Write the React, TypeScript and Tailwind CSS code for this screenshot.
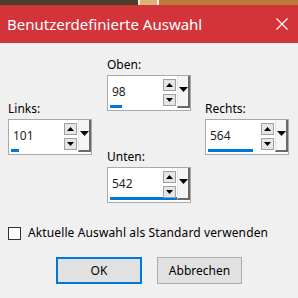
import React from 'react';

const font = { fontFamily: '"Segoe UI", "Noto Sans", "Open Sans", sans-serif' };

function Tri({ dir, w, h }: { dir: 'up' | 'down'; w: number; h: number }) {
  return (
    <svg width={w} height={h} viewBox={`0 0 ${w} ${h}`} className="block">
      {dir === 'up' ? (
        <polygon points={`0,${h} ${w},${h} ${w / 2},0`} fill="#000" />
      ) : (
        <polygon points={`0,0 ${w},0 ${w / 2},${h}`} fill="#000" />
      )}
    </svg>
  );
}

function SpinBox({ value, bar }: { value: string; bar: number }) {
  return (
    <div className="flex h-[36px] w-[84px] border border-[#a9a9a9] bg-white">
      <div className="flex w-[54px] flex-col">
        <div className="flex flex-1 items-center pl-[4px] pt-[3px] text-[12px] text-[#1e1e1e]">{value}</div>
        <div className="mb-[2px] ml-[2px] h-[3px] bg-[#0078d7]" style={{ width: bar }} />
      </div>
      <div className="ml-[1px] flex w-[13px] flex-col pt-[3px]">
        <div className="flex h-[12px] items-center justify-center border border-[#a0a0a0] bg-[#e6e6e6]">
          <Tri dir="up" w={7} h={4} />
        </div>
        <div className="mt-[3px] flex h-[12px] items-center justify-center border border-[#a0a0a0] bg-[#e6e6e6]">
          <Tri dir="down" w={7} h={4} />
        </div>
      </div>
      <div className="ml-[1px] flex h-[32px] w-[13px] justify-center border-b-2 border-l border-r-2 border-b-[#6a6a6a] border-l-[#e4e4e4] border-r-[#6a6a6a] bg-[#f5f5f5] pt-[11px]">
        <Tri dir="down" w={9} h={5} />
      </div>
    </div>
  );
}

function Field({ label, value, bar }: { label: string; value: string; bar: number }) {
  return (
    <div className="flex flex-col">
      <div className="h-[16px] text-[12px] leading-[16px] text-[#000]">{label}</div>
      <div className="mt-[2px]">
        <SpinBox value={value} bar={bar} />
      </div>
    </div>
  );
}

export default function App() {
  return (
    <div className="flex h-[298px] w-[298px] flex-col overflow-hidden bg-[#f0f0f0]" style={font}>
      <div className="flex h-[5px]">
        <div className="w-[138px] bg-[#4a3e2c]" />
        <div className="w-[2px] bg-[#f4f0e8]" />
        <div className="w-[17px] bg-[#d9b377]" />
        <div className="w-[2px] bg-[#f6efe0]" />
        <div className="flex-1 bg-[#b97c3c]" />
      </div>
      <div className="flex h-[38px] items-center justify-between bg-[#d2343a] pl-[7px] pr-[10px] text-white">
        <span className="text-[15px]">Benutzerdefinierte Auswahl</span>
        <svg width="12" height="12" viewBox="0 0 12 12">
          <path d="M0.5 0.5 L11.5 11.5 M11.5 0.5 L0.5 11.5" stroke="#fff" strokeWidth="1.1" />
        </svg>
      </div>

      <div className="flex pl-[8px]">
        <div className="w-[84px] pt-[58px]">
          <Field label="Links:" value="101" bar={8} />
        </div>
        <div className="ml-[15px] flex w-[84px] flex-col pt-[14px]">
          <Field label="Oben:" value="98" bar={12} />
          <div className="mt-[38px]">
            <Field label="Unten:" value="542" bar={68} />
          </div>
        </div>
        <div className="ml-[14px] w-[84px] pt-[58px]">
          <Field label="Rechts:" value="564" bar={45} />
        </div>
      </div>

      <div className="mt-[22px] flex items-center pl-[8px]">
        <div className="h-[13px] w-[13px] border border-[#333] bg-white" />
        <span className="ml-[7px] text-[12px] leading-[16px] tracking-[0.12px] text-black">
          Aktuelle Auswahl als Standard verwenden
        </span>
      </div>

      <div className="mt-[16px] flex pl-[56px]">
        <button className="flex h-[27px] w-[86px] items-center justify-center border-2 border-[#0078d7] bg-[#e1e1e1] text-[12px] text-black">
          OK
        </button>
        <button className="ml-[15px] flex h-[27px] w-[85px] items-center justify-center border border-[#adadad] bg-[#e1e1e1] text-[12px] text-black">
          Abbrechen
        </button>
      </div>
    </div>
  );
}
